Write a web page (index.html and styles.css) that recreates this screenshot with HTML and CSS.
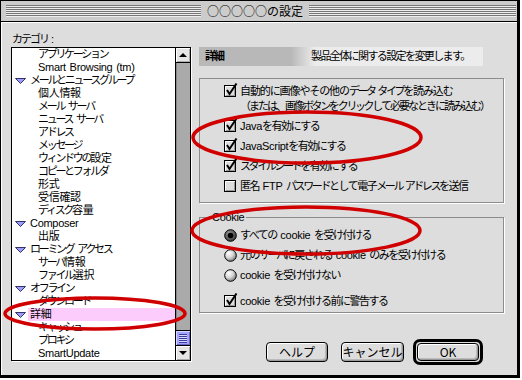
FILE: index.html
```html
<!DOCTYPE html>
<html lang="ja">
<head>
    <meta charset="UTF-8">
    <link rel="stylesheet" href="styles.css">
</head>
<body>
    <svg class="defs" width="0" height="0">
        <defs>
            <radialGradient id="rg-light" cx="35%" cy="30%" r="75%">
                <stop offset="0" stop-color="#ffffff"/>
                <stop offset="0.5" stop-color="#d8d8d8"/>
                <stop offset="1" stop-color="#777777"/>
            </radialGradient>
            <radialGradient id="rg-dark" cx="40%" cy="35%" r="70%">
                <stop offset="0" stop-color="#999999"/>
                <stop offset="1" stop-color="#333333"/>
            </radialGradient>
            <symbol id="cb-off" viewBox="0 0 14 14">
                <rect x="0.5" y="2.5" width="11" height="11" fill="#dddddd" stroke="#000"/>
                <path d="M1.5 12 V3.5 H10.5" stroke="#fff" fill="none"/>
                <path d="M2 12.5 H10.5 V4" stroke="#999" fill="none"/>
            </symbol>
            <symbol id="cb-on" viewBox="0 0 14 14">
                <rect x="0.5" y="2.5" width="11" height="11" fill="#dddddd" stroke="#000"/>
                <path d="M1.5 12 V3.5 H10.5" stroke="#fff" fill="none"/>
                <path d="M2 12.5 H10.5 V4" stroke="#999" fill="none"/>
                <path d="M3 7 L5.5 11 L12.5 0.5" stroke="#000" stroke-width="2" fill="none"/>
            </symbol>
            <symbol id="rb-off" viewBox="0 0 13 13">
                <circle cx="6.5" cy="6.5" r="5.8" fill="url(#rg-light)" stroke="#000"/>
            </symbol>
            <symbol id="rb-on" viewBox="0 0 13 13">
                <circle cx="6.5" cy="6.5" r="5.8" fill="url(#rg-dark)" stroke="#000"/>
                <circle cx="6.5" cy="6.5" r="2.8" fill="#000"/>
            </symbol>
            <symbol id="twisty" viewBox="0 0 11 6">
                <path d="M0.5 0.5 H10.5 L5.5 5.5 Z" fill="#9c9cff" stroke="#333366"/>
            </symbol>
        </defs>
    </svg>

    <div class="window">
        <div class="titlebar">
            <span class="stripes left"></span>
            <span class="title">○○○○○の設定</span>
            <span class="stripes"></span>
        </div>

        <div class="content">
            <div class="left">
                <div class="cat-label">カテゴリ :</div>
                <div class="listbox">
                    <ul class="tree">
                        <li class="child">アプリケーション</li>
                        <li class="child"><span class="en">Smart Browsing (tm)</span></li>
                        <li class="parent"><svg class="twisty"><use href="#twisty"/></svg><span>メールとニュースグループ</span></li>
                        <li class="child"><span class="kj">個人情報</span></li>
                        <li class="child">メール サーバ</li>
                        <li class="child">ニュース サーバ</li>
                        <li class="child">アドレス</li>
                        <li class="child">メッセージ</li>
                        <li class="child">ウィンドウの<span class="kj">設定</span></li>
                        <li class="child">コピーとフォルダ</li>
                        <li class="child"><span class="kj">形式</span></li>
                        <li class="child"><span class="kj">受信確認</span></li>
                        <li class="child">ディスク<span class="kj">容量</span></li>
                        <li class="parent"><svg class="twisty"><use href="#twisty"/></svg><span class="en">Composer</span></li>
                        <li class="child"><span class="kj">出版</span></li>
                        <li class="parent"><svg class="twisty"><use href="#twisty"/></svg><span>ローミング アクセス</span></li>
                        <li class="child">サーバ<span class="kj">情報</span></li>
                        <li class="child">ファイル<span class="kj">選択</span></li>
                        <li class="parent"><svg class="twisty"><use href="#twisty"/></svg><span>オフライン</span></li>
                        <li class="child">ダウンロード</li>
                        <li class="parent sel"><svg class="twisty"><use href="#twisty"/></svg><span class="kj">詳細</span></li>
                        <li class="child">キャッシュ</li>
                        <li class="child">プロキシ</li>
                        <li class="child"><span class="en">SmartUpdate</span></li>
                    </ul>
                    <div class="scrollbar">
                        <div class="sb-btn up"></div>
                        <div class="sb-track"></div>
                        <div class="sb-thumb"><span class="grip"></span></div>
                        <div class="sb-btn down"></div>
                    </div>
                </div>
            </div>

            <div class="right">
                <div class="header">
                    <span class="hd-name">詳細</span>
                    <span class="hd-desc">製品全体に関する設定を変更します。</span>
                </div>

                <div class="group">
                    <div class="opt">
                        <svg class="box"><use href="#cb-on"/></svg>
                        <span><span class="main">自動的に画像やその他の<span class="k">データ タイプ</span>を読み込む</span><br><span class="sub">（または、画像<span class="k">ボタン</span>を<span class="k">クリック</span>して必要なときに読み込む）</span></span>
                    </div>
                    <div class="opt">
                        <svg class="box"><use href="#cb-on"/></svg>
                        <span><span class="en">Java</span>を有効にする</span>
                    </div>
                    <div class="opt">
                        <svg class="box"><use href="#cb-on"/></svg>
                        <span><span class="en">JavaScript</span>を有効にする</span>
                    </div>
                    <div class="opt">
                        <svg class="box"><use href="#cb-on"/></svg>
                        <span><span class="k">スタイルシート</span>を有効にする</span>
                    </div>
                    <div class="opt">
                        <svg class="box"><use href="#cb-off"/></svg>
                        <span>匿名 <span class="en">FTP</span> <span class="k">パスワード</span>として電子<span class="k">メール アドレス</span>を送信</span>
                    </div>
                </div>

                <fieldset class="group cookie">
                    <legend class="en">Cookie</legend>
                    <div class="opts">
                        <div class="opt">
                            <svg class="box radio"><use href="#rb-on"/></svg>
                            <span>すべての <span class="en">cookie</span> を受け付ける</span>
                        </div>
                        <div class="opt">
                            <svg class="box radio"><use href="#rb-off"/></svg>
                            <span>元の<span class="k">サーバ</span>に戻される <span class="en">cookie</span> のみを受け付ける</span>
                        </div>
                        <div class="opt">
                            <svg class="box radio"><use href="#rb-off"/></svg>
                            <span><span class="en">cookie</span> を受け付けない</span>
                        </div>
                        <div class="opt warn">
                            <svg class="box"><use href="#cb-on"/></svg>
                            <span><span class="en">cookie</span> を受け付ける前に警告する</span>
                        </div>
                    </div>
                </fieldset>

                <div class="buttons">
                    <button type="button" class="btn help">ヘルプ</button>
                    <button type="button" class="btn cancel">キャンセル</button>
                    <span class="default-ring"><button type="button" class="btn ok">OK</button></span>
                </div>
            </div>
        </div>
    </div>

    <!-- 赤い丸印 -->
    <svg class="marks" width="522" height="380">
        <ellipse cx="95" cy="313.5" rx="90" ry="15.5"/>
        <ellipse cx="307" cy="137.5" rx="114" ry="25.5"/>
        <ellipse cx="306" cy="230.5" rx="114" ry="23.5"/>
    </svg>
</body>
</html>
```

FILE: styles.css
```css
body {
    margin: 0;
    width: 522px;
    height: 380px;
    position: relative;
    background-color: #ffffff;
    font-family: "Liberation Sans", "Noto Sans CJK JP", sans-serif;
    font-size: 11px;
    letter-spacing: -1.5px; /* 和文を詰める */
    word-spacing: 2px;
    color: #000;
}

/* カタカナはさらに詰める */
.k {
    letter-spacing: -2.4px;
}

.kj {
    letter-spacing: -0.3px;
}

.en {
    letter-spacing: -0.3px;
}

.defs {
    position: absolute;
}

.window {
    width: 520px;
    height: 378px;
    box-sizing: border-box;
    border: 1px solid #000;
    border-right-width: 3px;
    border-bottom-width: 3px;
    background-color: #dddddd;
    display: flex;
    flex-direction: column;
}

/* タイトルバー */
.titlebar {
    height: 20px;
    flex: none;
    display: flex;
    align-items: center;
    padding: 0 1px 0 5px;
    background-color: #cccccc;
    border-bottom: 1px solid #000;
}

.stripes {
    flex: 1;
    height: 12px;
    background: repeating-linear-gradient(to bottom, #777 0, #777 1px, #eee 1px, #eee 2px);
}

.stripes.left {
    flex: none;
    width: 195px;
}

.title {
    padding: 0 6px;
    font-family: "Noto Sans CJK JP", sans-serif;
    font-size: 12px;
    letter-spacing: 0;
    line-height: 20px;
}

.content {
    flex: 1;
    display: flex;
    align-items: flex-start;
    padding: 11px 0 0 10px;
    box-shadow: inset 1px 1px 0 #fff;
}

/* 左側: カテゴリ */
.cat-label {
    line-height: 13px;
    margin: 0 0 1px 1px;
    letter-spacing: -2px;
}

.listbox {
    width: 180px;
    height: 314px;
    box-sizing: border-box;
    border: 1px solid #000;
    background-color: #fff;
    display: flex;
    box-shadow: 1px 1px 0 #fff;
}

.tree {
    list-style: none;
    margin: 0;
    padding: 0;
    flex: 1;
    overflow: hidden;
    letter-spacing: -2.3px;
    word-spacing: 3px;
}

.tree .en {
    word-spacing: 1px;
}

.tree li {
    height: 13px;
    line-height: 13px;
    display: flex;
    align-items: center;
    white-space: nowrap;
}

.tree .child {
    padding-left: 26px;
}

.tree .parent {
    padding-left: 3px;
}

.twisty {
    width: 11px;
    height: 6px;
    margin: 1px 2px 0 0;
    flex: none;
}

.tree .parent span {
    padding-left: 2px;
    flex: 1;
}

.tree .sel span {
    background-color: #fcccfc;
}

.scrollbar {
    width: 15px;
    flex: none;
    box-sizing: border-box;
    border-left: 1px solid #000;
    display: flex;
    flex-direction: column;
}

.sb-btn {
    height: 14px;
    background-color: #e6e6e6;
    box-shadow: inset 1px 1px 0 #fff, inset -1px -1px 0 #aaa;
    display: flex;
    align-items: center;
    justify-content: center;
}

.sb-btn.up {
    border-bottom: 1px solid #000;
}

.sb-btn.down {
    border-top: 1px solid #000;
}

.sb-btn.up::after {
    content: "";
    border-left: 4px solid transparent;
    border-right: 4px solid transparent;
    border-bottom: 4px solid #000;
}

.sb-btn.down::after {
    content: "";
    border-left: 4px solid transparent;
    border-right: 4px solid transparent;
    border-top: 4px solid #000;
}

.sb-track {
    flex: 1;
    background-color: #aaaaaa;
    box-shadow: inset 1px 0 0 #888;
}

.sb-thumb {
    height: 14px;
    border-top: 1px solid #000;
    background-color: #a4a4ff;
    box-shadow: inset 1px 1px 0 #d4d4ff, inset -1px -1px 0 #6666cc;
    display: flex;
    align-items: center;
    justify-content: center;
}

.grip {
    width: 8px;
    height: 9px;
    background: repeating-linear-gradient(to bottom, #3c3ca0 0, #3c3ca0 1px, #d8d8ff 1px, #d8d8ff 2px);
}

/* 右側 */
.right {
    margin: 14px 0 0 8px;
    width: 305px;
}

.header {
    width: 284px;
    height: 19px;
    line-height: 19px;
    display: flex;
    white-space: nowrap;
    letter-spacing: -2px;
    background: linear-gradient(to right, #b8b8b8 0, #b8b8b8 92px, #ececec 116px, #ececec 100%);
}

.hd-name {
    width: 112px;
    flex: none;
    padding-left: 6px;
    box-sizing: border-box;
    font-weight: bold;
}

.hd-desc {
    letter-spacing: -1.6px;
}

.group {
    margin: 12px 0 0 0;
    border: 1px solid #8c8c8c;
    box-shadow: 1px 1px 0 #fff;
    padding: 5px 0 8px 24px;
}

.opt {
    display: flex;
    align-items: flex-start;
    line-height: 15px;
    margin-bottom: 5px;
    white-space: nowrap;
}

.opt:last-child {
    margin-bottom: 0;
}

.main {
    letter-spacing: -1.1px;
}

.sub {
    letter-spacing: -2px;
}

.box {
    width: 14px;
    height: 14px;
    flex: none;
    margin: -1px 2px 0 0;
}

.box.radio {
    width: 13px;
    height: 13px;
    margin: 1px 3px 0 0;
}

fieldset.cookie {
    margin-top: 8px;
    padding: 4px 0 3px 0;
    min-width: 0;
    width: 305px;
    box-sizing: border-box;
}

.cookie legend {
    margin-left: 10px;
    padding: 0 2px;
    line-height: 13px;
}

.opts {
    padding-left: 24px;
}

.opt.warn {
    margin-top: 11px;
}

.buttons {
    display: flex;
    justify-content: flex-end;
    align-items: center;
    margin-top: 26px;
    padding-right: 21px;
}

.btn {
    height: 20px;
    padding: 0;
    border: 1px solid #000;
    border-radius: 4px;
    background-color: #dddddd;
    box-shadow: inset 1px 1px 0 #fff, inset -1px -1px 0 #999, inset -2px -2px 0 #bbb;
    font-family: "Noto Sans CJK JP", sans-serif;
    font-size: 12px;
    letter-spacing: 0;
    word-spacing: 0;
    color: #000;
    line-height: 18px;
}

.btn.help {
    width: 62px;
}

.btn.cancel {
    width: 63px;
    margin-left: 13px;
}

.default-ring {
    margin-left: 9px;
    padding: 1px;
    border: 3px solid #000;
    border-radius: 7px;
    display: flex;
}

.btn.ok {
    width: 62px;
    height: 18px;
    line-height: 16px;
}

.marks {
    position: absolute;
    left: 0;
    top: 0;
    pointer-events: none;
}

.marks ellipse {
    fill: none;
    stroke: #d00000;
    stroke-width: 3.5;
}
```
